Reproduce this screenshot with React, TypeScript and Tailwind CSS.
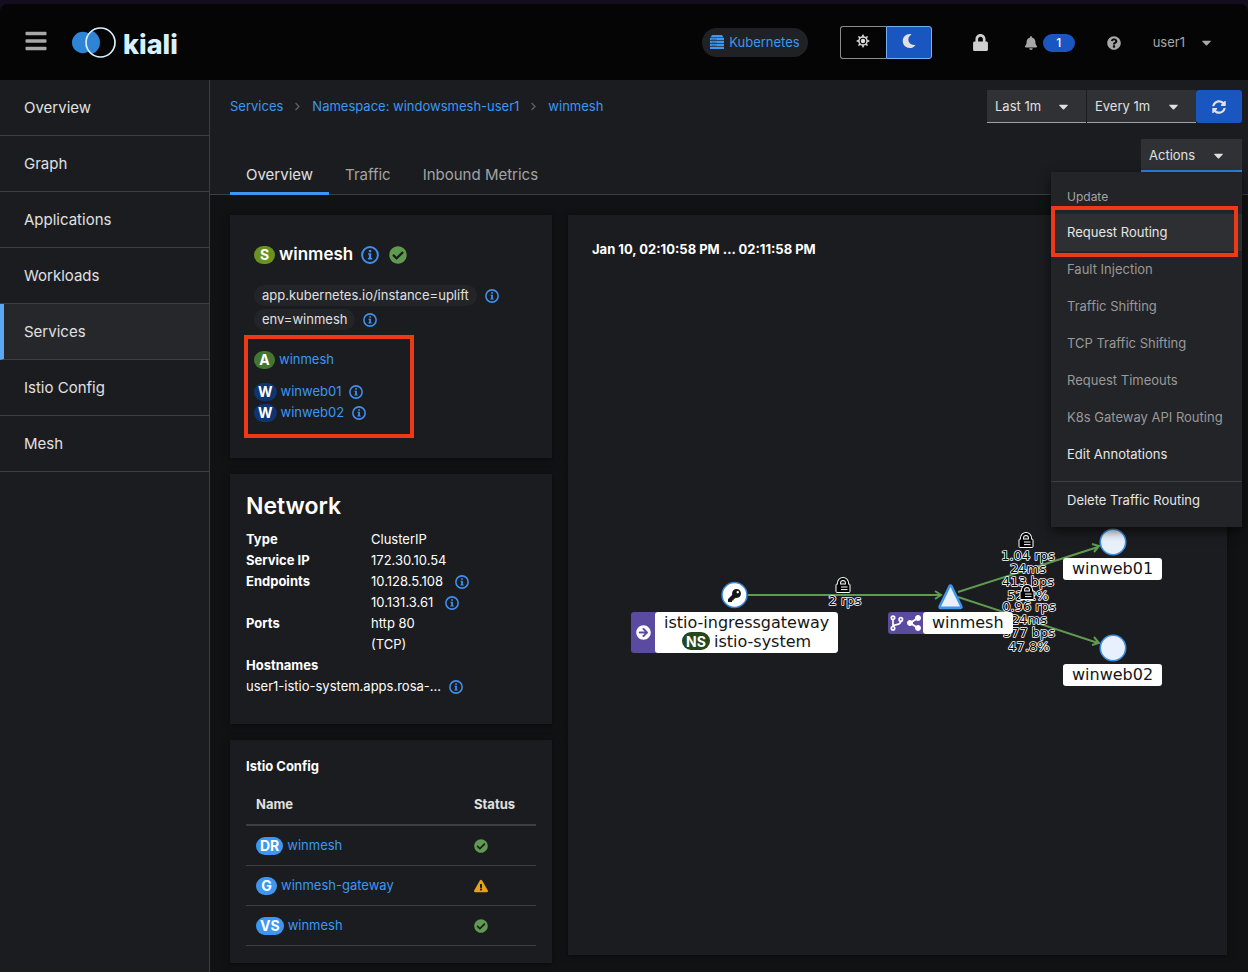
import React from 'react';
import {
  FaArrowCircleRight,
  FaBars,
  FaBell,
  FaCaretDown,
  FaCheckCircle,
  FaChevronRight,
  FaExclamationTriangle,
  FaKey,
  FaLock,
  FaMoon,
  FaQuestionCircle,
  FaShareAlt,
  FaSyncAlt,
} from 'react-icons/fa';

const navItems = ['Overview', 'Graph', 'Applications', 'Workloads', 'Services', 'Istio Config', 'Mesh'];

function Info({ className = 'size-[14px]' }: { className?: string }) {
  return (
    <svg viewBox="0 0 18 18" className={`shrink-0 text-[#3f8fee] ${className}`} aria-label="Info" role="img">
      <circle cx="9" cy="9" r="7.9" fill="none" stroke="currentColor" strokeWidth="2" />
      <path d="M7.9 4.1h2.3v2.1H7.9zM7 7.3h3.2v4.8h1v1.5H6.9v-1.5h1V8.8H7z" fill="currentColor" />
    </svg>
  );
}

function Sun() {
  const rays = [0, 45, 90, 135, 180, 225, 270, 315];
  return (
    <svg viewBox="0 0 16 16" className="size-[14px] text-[#e0e0e0]" aria-hidden="true">
      <circle cx="8" cy="8" r="4.6" fill="none" stroke="currentColor" strokeWidth="1.5" />
      <circle cx="8" cy="8" r="2.5" fill="currentColor" />
      {rays.map((a) => (
        <path key={a} d="M8 0l1.7 3.2H6.3z" fill="currentColor" transform={`rotate(${a} 8 8)`} />
      ))}
    </svg>
  );
}

function ServerStack() {
  return (
    <svg viewBox="0 0 14 14" className="h-[14px] w-[14px] text-[#3d97f2]" aria-hidden="true">
      <path d="M2 0h10l1.5 2.5h-13z" fill="currentColor" />
      {[3, 6, 9].map((y) => (
        <g key={y}>
          <rect x="0" y={y} width="14" height="2.3" fill="currentColor" />
          <path d={`M1.5 ${y + 1.2}h5`} stroke="#1c3f66" strokeWidth="0.8" strokeDasharray="1.4 0.6" />
        </g>
      ))}
      <rect x="0" y="12" width="14" height="2" fill="currentColor" />
    </svg>
  );
}

function Branch() {
  return (
    <svg viewBox="0 0 14 16" className="h-4 w-3.5" fill="none" stroke="currentColor" strokeWidth="1.7" aria-hidden="true">
      <circle cx="3" cy="2.8" r="1.7" />
      <circle cx="3" cy="13.2" r="1.7" />
      <circle cx="10.8" cy="4.4" r="1.7" />
      <path d="M3 4.5v7M10.8 6.1c0 3-2 3.3-4.3 3.6-1.8.3-3.2.6-3.5 1.8" />
    </svg>
  );
}

function Logo() {
  return (
    <a href="#" className="flex items-center gap-[7px]">
      <svg viewBox="0 0 44 32" className="h-8 w-11" aria-hidden="true">
        <clipPath id="ring">
          <circle cx="28.5" cy="16.5" r="14.5" />
        </clipPath>
        <circle cx="10.7" cy="16.5" r="10.7" fill="#2f84d6" />
        <circle cx="28.5" cy="16.5" r="15" fill="#050505" />
        <circle cx="15.5" cy="16.5" r="12.5" fill="#2f84d6" clipPath="url(#ring)" />
        <circle cx="28.5" cy="16.5" r="14.5" fill="none" stroke="#d9f1ff" strokeWidth="1.7" />
      </svg>
      <span className="pt-1.5 text-[27px] leading-8 font-extrabold text-[#d9f1ff]">kiali</span>
    </a>
  );
}

function Badge({ children, color }: { children: string; color: string }) {
  return (
    <span className={`inline-flex h-[18px] min-w-[21px] items-center justify-center rounded-full px-1 text-[14px] leading-[18px] font-bold text-white ${color}`}>
      {children}
    </span>
  );
}

function Header() {
  return (
    <header className="flex h-[76px] items-center rounded-t-lg bg-[#050505] pr-[34px] pl-6">
      <button aria-label="Toggle navigation" className="mr-6 pb-0.5 text-[#a8a8a8]">
        <FaBars className="size-6" />
      </button>
      <Logo />
      <div className="ml-auto flex items-center">
        <button className="flex h-[29px] items-center gap-[5px] rounded-full bg-[#1f2125] px-2 text-[13px] text-[#3d97f2]">
          <ServerStack />
          <span className="pt-px">Kubernetes</span>
        </button>
        <div className="ml-8 flex h-[33px]">
          <button aria-label="Light theme" className="flex w-[46px] items-center justify-center rounded-l-[3px] border border-r-0 border-[#8a8d90] pb-0.5">
            <Sun />
          </button>
          <button aria-label="Dark theme" className="flex w-[46px] items-center justify-center rounded-r-[3px] border border-[#73b1f4] bg-[#1a56bf] pb-0.5 text-[#e0e0e0]">
            <FaMoon className="size-[14px]" />
          </button>
        </div>
        <FaLock className="ml-10 size-[17px] text-[#cfcfcf]" />
        <button className="ml-[35px] flex items-center gap-[5px] pt-0.5 text-[#a8a8a8]" aria-label="Notifications">
          <FaBell className="size-[14px]" />
          <span className="flex h-[18px] w-8 items-center justify-center rounded-full bg-[#1a56bf] text-[12px] font-medium text-white">1</span>
        </button>
        <button aria-label="Help" className="ml-8 pt-0.5 text-[#a8a8a8]">
          <FaQuestionCircle className="size-[14px]" />
        </button>
        <button className="ml-8 flex items-center gap-3.5 text-[13px] text-[#a8a8a8]">
          <span className="pt-px">user1</span>
          <FaCaretDown className="size-[15px]" />
        </button>
      </div>
    </header>
  );
}

function Sidebar() {
  return (
    <nav className="w-[210px] shrink-0 border-r border-[#3c3f42] bg-[#1b1c20]">
      {navItems.map((n) => (
        <a
          key={n}
          href="#"
          className={`flex h-14 items-center border-b border-[#3c3f42] pt-0.5 text-[15px] text-[#e0e0e0] ${
            n === 'Services' ? 'border-l-4 border-l-[#5ba6f5] bg-[#26272b] pl-5' : 'pl-6'
          }`}
        >
          {n}
        </a>
      ))}
    </nav>
  );
}

function Picker({ label, value, width }: { label: string; value: string; width: string }) {
  return (
    <div className={`relative flex h-[33px] items-center border-b border-[#a0a0a0] bg-[#303134] ${width}`}>
      <select aria-label={label} className="h-full w-full appearance-none bg-transparent pt-0.5 pl-2 text-[13px] text-[#e0e0e0]">
        <option>{value}</option>
      </select>
      <FaCaretDown className="pointer-events-none absolute right-[15px] size-[15px] text-[#e0e0e0]" />
    </div>
  );
}

const menuItems = [
  { text: 'Fault Injection', on: false },
  { text: 'Traffic Shifting', on: false },
  { text: 'TCP Traffic Shifting', on: false },
  { text: 'Request Timeouts', on: false },
  { text: 'K8s Gateway API Routing', on: false },
  { text: 'Edit Annotations', on: true },
];

function ActionsMenu() {
  return (
    <div className="relative self-start">
      <button className="flex h-[33px] w-[101px] items-center justify-between border-b-2 border-[#2f86dd] bg-[#303134] pt-0.5 pr-4 pl-2 text-[13px] text-[#e0e0e0]">
        Actions
        <FaCaretDown className="size-[15px]" />
      </button>
      <div role="menu" className="absolute top-full right-0 z-10 flex w-[191px] flex-col bg-[#232427] py-2 text-[13px] leading-[21px] whitespace-nowrap shadow-[0_4px_10px_rgba(0,0,0,0.6)]">
        <div className="px-4 py-2 text-[12px] leading-[18px] text-[#a3a3a3]">Update</div>
        <div className="relative">
          <button role="menuitem" className="w-full bg-[#2e2f32] px-4 py-2 text-left text-[#e6e6e6]">
            Request Routing
          </button>
          <span className="pointer-events-none absolute -top-2 right-1 -bottom-1.5 left-0 border-4 border-[#ec3a18]" />
        </div>
        {menuItems.map((m) => (
          <button key={m.text} role="menuitem" disabled={!m.on} className={`px-4 py-2 text-left ${m.on ? 'text-[#e6e6e6]' : 'text-[#999999]'}`}>
            {m.text}
          </button>
        ))}
        <hr className="mt-2 border-[#3c3f42]" />
        <button role="menuitem" className="px-4 py-2 text-left text-[#e6e6e6]">
          Delete Traffic Routing
        </button>
      </div>
    </div>
  );
}

function Toolbar() {
  const crumbs = ['Services', 'Namespace: windowsmesh-user1', 'winmesh'];
  const tabs = ['Overview', 'Traffic', 'Inbound Metrics'];
  return (
    <div className="flex h-[115px] flex-col border-b border-[#3c3f42] bg-[#1b1c20] pt-2.5 pr-1.5 pl-5">
      <div className="flex items-center justify-between">
        <nav aria-label="Breadcrumb" className="flex items-center text-[13px] text-[#3d97f2]">
          {crumbs.map((c, i) => (
            <React.Fragment key={c}>
              {i > 0 && <FaChevronRight className="mx-2.5 size-[9px] text-[#5c5f62]" />}
              <a href="#">{c}</a>
            </React.Fragment>
          ))}
        </nav>
        <div className="flex">
          <Picker label="Time range" value="Last 1m" width="w-[99px]" />
          <Picker label="Refresh interval" value="Every 1m" width="ml-px w-[109px]" />
          <button aria-label="Refresh" className="flex h-[33px] w-[46px] items-center justify-center rounded-[3px] bg-[#1a56bf] text-[#e0e0e0]">
            <FaSyncAlt className="size-[14px]" />
          </button>
        </div>
      </div>
      <div className="mt-4 flex flex-1 justify-between">
        <div role="tablist" className="mt-4 -mb-px flex text-[15px]">
          {tabs.map((t, i) => (
            <button
              key={t}
              role="tab"
              aria-selected={i === 0}
              className={`border-b-3 px-4 pt-[3px] ${i === 0 ? 'border-[#3d97f2] text-[#e0e0e0]' : 'border-transparent text-[#a3a3a3]'}`}
            >
              {t}
            </button>
          ))}
        </div>
        <ActionsMenu />
      </div>
    </div>
  );
}

const card = 'bg-[#1b1c1f] shadow-[0_1px_6px_rgba(0,0,0,0.5)]';

function ServiceCard() {
  return (
    <section className={`${card} px-6 pt-6 pb-5`}>
      <div className="flex h-8 items-center">
        <Badge color="bg-[#6b911f]">S</Badge>
        <h1 className="ml-1 text-[17px] font-semibold text-white">winmesh</h1>
        <Info className="ml-2 size-[18px]" />
        <FaCheckCircle className="ml-2.5 size-[18px] text-[#5f9a50]" />
      </div>
      <div className="mt-3.5 flex flex-col gap-[3px] text-[13px] text-[#e0e0e0]">
        {['app.kubernetes.io/instance=uplift', 'env=winmesh'].map((l) => (
          <div key={l} className="flex h-[21px] items-center gap-2">
            <span className="flex h-[21px] items-center rounded-full bg-[#232427] px-2 pt-px">{l}</span>
            <Info />
          </div>
        ))}
      </div>
      <div className="mt-[5px] -ml-2.5 w-[170px] border-4 border-[#ec3a18] px-1.5 pt-2.5 pb-[11px] text-[13px] text-[#3d97f2]">
        <div className="flex h-[21px] items-center gap-1">
          <Badge color="bg-[#44762f]">A</Badge>
          <a href="#">winmesh</a>
        </div>
        <div className="mt-[11px]">
          {['winweb01', 'winweb02'].map((w) => (
            <div key={w} className="flex h-[21px] items-center gap-1">
              <Badge color="bg-[#10346f]">W</Badge>
              <a href="#">{w}</a>
              <Info className="ml-1 size-[14px]" />
            </div>
          ))}
        </div>
      </div>
    </section>
  );
}

function NetworkCard() {
  return (
    <section className={`${card} px-4 pt-4 pb-[27px]`}>
      <h2 className="text-[23px] leading-8 font-semibold text-white">Network</h2>
      <dl className="mt-[7px] grid grid-cols-[125px_1fr] text-[13px] leading-[21px] text-white">
        <dt className="font-bold">Type</dt>
        <dd>ClusterIP</dd>
        <dt className="font-bold">Service IP</dt>
        <dd>172.30.10.54</dd>
        <dt className="font-bold">Endpoints</dt>
        <dd>
          {['10.128.5.108', '10.131.3.61'].map((ip) => (
            <div key={ip} className="flex h-[21px] items-center gap-3">
              {ip}
              <Info />
            </div>
          ))}
        </dd>
        <dt className="font-bold">Ports</dt>
        <dd>
          http 80
          <br />
          (TCP)
        </dd>
        <dt className="col-span-2 font-bold">Hostnames</dt>
        <dd className="col-span-2 flex items-center gap-2">
          user1-istio-system.apps.rosa-...
          <Info />
        </dd>
      </dl>
    </section>
  );
}

const configs = [
  { kind: 'DR', name: 'winmesh', ok: true },
  { kind: 'G', name: 'winmesh-gateway', ok: false },
  { kind: 'VS', name: 'winmesh', ok: true },
];

function ConfigCard() {
  return (
    <section className={`${card} px-4 pt-4 pb-[17px]`}>
      <h2 className="text-[13px] leading-5 font-bold text-white">Istio Config</h2>
      <table className="mt-2 w-full border-separate border-spacing-0 text-[13px]">
        <thead>
          <tr className="text-left text-[#e0e0e0]">
            <th className="h-[42px] border-b-2 border-[#3c3f42] pt-px pl-2.5 font-bold">Name</th>
            <th className="w-[72px] border-b-2 border-[#3c3f42] pt-px pl-2.5 font-bold">Status</th>
          </tr>
        </thead>
        <tbody>
          {configs.map((c) => (
            <tr key={c.kind}>
              <td className="h-10 border-b border-[#3c3f42] pl-2.5">
                <span className="flex items-center gap-1">
                  <Badge color="bg-[#3d97f2]">{c.kind}</Badge>
                  <a href="#" className="text-[#3d97f2]">{c.name}</a>
                </span>
              </td>
              <td className="border-b border-[#3c3f42] pl-2.5">
                {c.ok ? <FaCheckCircle className="size-[14px] text-[#5f9a50]" /> : <FaExclamationTriangle className="size-[14px] text-[#e8a020]" />}
              </td>
            </tr>
          ))}
        </tbody>
      </table>
    </section>
  );
}

function EdgeLock({ x, y }: { x: number; y: number }) {
  return (
    <g transform={`translate(${x} ${y})`}>
      <path d="M-4 0v-2a4 4 0 0 1 8 0V0" fill="none" stroke="#fff" strokeWidth="4" />
      <rect x="-7" y="-1" width="14" height="8.5" rx="1" fill="#000" stroke="#fff" strokeWidth="1" />
      <path d="M-4 0v-2a4 4 0 0 1 8 0V0" fill="none" stroke="#000" strokeWidth="2.2" />
      <path d="M-2 2h6.5M-2 4.6h6.5" stroke="#fff" strokeWidth="1" />
    </g>
  );
}

const edgeText = [
  { x: 845, y: 605, t: '2 rps' },
  { x: 1028, y: 560, t: '1.04 rps' },
  { x: 1028, y: 573, t: '24ms' },
  { x: 1028, y: 586, t: '413 bps' },
  { x: 1028, y: 600, t: '52.2%' },
  { x: 1029, y: 611, t: '0.96 rps' },
  { x: 1029, y: 624, t: '24ms' },
  { x: 1029, y: 637, t: '377 bps' },
  { x: 1029, y: 651, t: '47.8%' },
];

function EdgeLabels({ items }: { items: typeof edgeText }) {
  return (
    <g fontSize="13" textAnchor="middle" fill="#000" stroke="#fff" strokeWidth="1.6" strokeLinejoin="round" className="[paint-order:stroke]">
      {items.map((e) => (
        <text key={`${e.x}-${e.y}`} x={e.x} y={e.y}>{e.t}</text>
      ))}
    </g>
  );
}

function Graph() {
  return (
    <section className={`${card} relative h-[740px] flex-1 overflow-hidden font-["DejaVu_Sans",sans-serif]`}>
      <h2 className="px-6 pt-6 font-[Inter,sans-serif] text-[13px] leading-5 font-bold text-white">Jan 10, 02:10:58 PM ... 02:11:58 PM</h2>
      <svg viewBox="568 215 659 740" width="659" height="740" className="absolute top-0 left-0 max-w-none">
        <g fill="none" stroke="#5f9a50" strokeWidth="2">
          <path d="M748 595h192M935 591l6 4-6 4" />
          <path d="M958 592L1098 547M1092 544l7 2-5 6" />
          <path d="M958 597L1098 643M1094 637l5 6-7 2" />
        </g>
        <circle cx="734.5" cy="595" r="12.5" fill="#fff" stroke="#2f84d6" strokeWidth="1.5" />
        <circle cx="1113" cy="542" r="12.7" fill="#e7f0fb" stroke="#3d8ee6" strokeWidth="1.6" />
        <circle cx="1113" cy="648" r="12.7" fill="#e7f0fb" stroke="#3d8ee6" strokeWidth="1.6" />
        <path d="M950.5 586.5L960.5 607H940.5z" fill="#e7f0fb" stroke="#3d97f2" strokeWidth="4.4" strokeLinejoin="round" />
        <path d="M950.5 587L960 606.5H941z" fill="#e7f0fb" />
        <EdgeLabels items={edgeText.slice(0, 5)} />
        <EdgeLock x={843} y={585} />
        <EdgeLock x={1026} y={540} />
        <EdgeLock x={1027} y={592} />
        <EdgeLabels items={edgeText.slice(5)} />
      </svg>
      <FaKey className="absolute top-[374px] left-[160px] size-[13px] text-[#151515]" />
      <div className="absolute top-[397px] left-[63px] flex h-[41px] overflow-hidden rounded-[3px] bg-[#5a4aa0] text-[16px] leading-[19px] text-[#151515]">
        <span className="flex w-6 items-center justify-center text-white">
          <FaArrowCircleRight className="size-[15px]" />
        </span>
        <span className="flex flex-col items-center justify-center rounded-[3px] bg-white px-[9px] pb-0.5">
          <span>istio-ingressgateway</span>
          <span className="flex items-center gap-1">
            <span className="flex h-[18px] items-center rounded-full bg-[#24481c] px-1 font-[Inter,sans-serif] text-[14px] font-bold text-white">NS</span>
            istio-system
          </span>
        </span>
      </div>
      <div className="absolute top-[397px] left-[320px] flex h-[22px] overflow-hidden rounded-[3px] bg-[#5a4aa0] text-[16px] text-[#151515]">
        <span className="flex w-[35px] items-center justify-center gap-0.5 text-white">
          <Branch />
          <FaShareAlt className="size-4" />
        </span>
        <span className="flex items-center rounded-[3px] bg-white px-[9px]">winmesh</span>
      </div>
      <div className="absolute top-[343px] left-[495px] flex h-[22px] items-center rounded-[3px] bg-white px-[9px] text-[16px] text-[#151515]">winweb01</div>
      <div className="absolute top-[449px] left-[495px] flex h-[22px] items-center rounded-[3px] bg-white px-[9px] text-[16px] text-[#151515]">winweb02</div>
    </section>
  );
}

export default function App() {
  return (
    <div className="flex min-h-screen flex-col bg-[#130e1f] pt-1 font-[Inter,sans-serif]">
      <Header />
      <div className="flex flex-1">
        <Sidebar />
        <main className="min-w-0 flex-1 bg-[#111214]">
          <Toolbar />
          <div className="flex items-start gap-4 pt-5 pr-[21px] pb-2 pl-5">
            <div className="flex w-[322px] shrink-0 flex-col gap-4">
              <ServiceCard />
              <NetworkCard />
              <ConfigCard />
            </div>
            <Graph />
          </div>
        </main>
      </div>
    </div>
  );
}
